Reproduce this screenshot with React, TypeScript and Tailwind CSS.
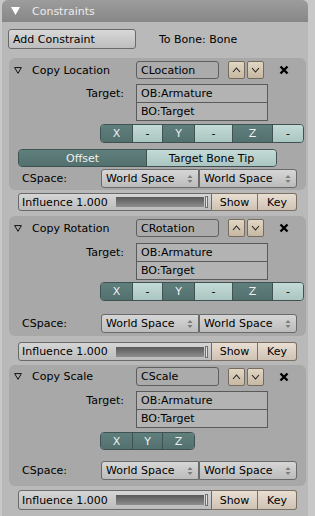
import type { ReactNode } from "react";

type Kind = "location" | "rotation" | "scale";

const spacing: Record<Kind, { box: string; head: string; target: string; xyz: string; cspace: string }> = {
  location: { box: "pt-[3px] pb-[2px]", head: "h-[18px]", target: "mt-[5px]", xyz: "mt-[3px] h-[19px]", cspace: "mt-[2px]" },
  rotation: { box: "pt-[3px] pb-[3px]", head: "h-[18px]", target: "mt-[6px]", xyz: "mt-[2px] h-[19px]", cspace: "mt-[13px]" },
  scale: { box: "pt-[2px] pb-[6px]", head: "h-[19px]", target: "mt-[5px]", xyz: "mt-[4px] h-[18px]", cspace: "mt-[11px]" },
};

function UpDownArrows() {
  return (
    <svg width="6" height="10" viewBox="0 0 6 10" className="shrink-0">
      <path d="M0.5 4 L3 1 L5.5 4 Z" fill="#7c7c7c" />
      <path d="M0.5 6 L3 9 L5.5 6 Z" fill="#7c7c7c" />
    </svg>
  );
}

function Dropdown({ label }: { label: string }) {
  return (
    <div className="flex h-full w-[98px] items-center justify-between border border-[#6a6a6a] bg-gradient-to-b from-[#d6d6d6] to-[#bcbcbc] pl-[4px] pr-[5px] first:rounded-l-[3px] last:rounded-r-[3px]">
      <span>{label}</span>
      <UpDownArrows />
    </div>
  );
}

function Segment({ dark, children, w }: { dark: boolean; children: ReactNode; w: string }) {
  return (
    <div
      className={`flex h-full items-center justify-center border-r border-[#3f5251] last:border-r-0 ${w} ${
        dark ? "bg-gradient-to-b from-[#5f7f7d] to-[#52706e] text-[#f0f0f0]" : "bg-gradient-to-b from-[#c4dbd7] to-[#aac5c1] text-black"
      }`}
    >
      {children}
    </div>
  );
}

function MoveButton({ up }: { up: boolean }) {
  return (
    <div className="flex h-[18px] w-[17px] items-center justify-center rounded-[2px] border border-[#766c5e] bg-gradient-to-b from-[#e2d6c4] to-[#c6b8a2]">
      <svg width="9" height="6" viewBox="0 0 9 6">
        <path d={up ? "M1 5 L4.5 1 L8 5" : "M1 1 L4.5 5 L8 1"} fill="none" stroke="#222" strokeWidth="1.1" />
      </svg>
    </div>
  );
}

function Constraint({ title, name, kind }: { title: string; name: string; kind: Kind }) {
  const s = spacing[kind];
  return (
    <div className={`ml-[7px] w-[297px] rounded-[6px] bg-[#a8a8a8] ${s.box}`}>
      <div className={`flex items-center ${s.head}`}>
        <div className="flex w-[127px] items-center">
          <svg width="8" height="7" viewBox="0 0 8 7" className="ml-[5px]">
            <path d="M0.6 0.6 H7.4 L4 6.3 Z" fill="none" stroke="#111" strokeWidth="1" />
          </svg>
          <span className="ml-[10px]">{title}</span>
        </div>
        <div className="flex h-full w-[83px] items-center rounded-[3px] border border-[#5e5e5e] bg-[#ababab] pl-[4px]">
          {name}
        </div>
        <div className="ml-[9px] flex gap-[2px]">
          <MoveButton up />
          <MoveButton up={false} />
        </div>
        <svg width="10" height="10" viewBox="0 0 10 10" className="ml-[15px]">
          <path d="M1.5 1.5 L8.5 8.5 M8.5 1.5 L1.5 8.5" stroke="#000" strokeWidth="2.4" />
        </svg>
      </div>

      <div className={`flex ${s.target}`}>
        <div className="flex h-[18px] w-[115px] items-center justify-end">Target:</div>
        <div className="ml-[12px] w-[132px] border border-[#5a5a5a] bg-[#b3b3b3]">
          <div className="flex h-[17px] items-center pl-[4px]">OB:Armature</div>
          <div className="flex h-[18px] items-center border-t border-[#5a5a5a] pl-[4px]">BO:Target</div>
        </div>
      </div>

      {kind === "scale" ? (
        <div className={`ml-[91px] flex w-[95px] overflow-hidden rounded-[4px] border border-[#3f5251] ${s.xyz}`}>
          <Segment dark w="w-[32px]">X</Segment>
          <Segment dark w="w-[30px]">Y</Segment>
          <Segment dark w="w-[31px]">Z</Segment>
        </div>
      ) : (
        <div className={`ml-[91px] flex w-[204px] overflow-hidden rounded-[4px] border border-[#3f5251] ${s.xyz}`}>
          <Segment dark w="w-[32px]">X</Segment>
          <Segment dark={false} w="w-[30px]">-</Segment>
          <Segment dark w="w-[32px]">Y</Segment>
          <Segment dark={false} w="w-[38px]">-</Segment>
          <Segment dark w="w-[40px]">Z</Segment>
          <Segment dark={false} w="w-[30px]">-</Segment>
        </div>
      )}

      {kind === "location" ? (
        <div className="ml-[9px] mt-[6px] flex h-[18px] w-[259px] overflow-hidden rounded-[4px] border border-[#3f5251]">
          <Segment dark w="w-[129px]">Offset</Segment>
          <Segment dark={false} w="w-[130px]">Target Bone Tip</Segment>
        </div>
      ) : null}

      <div className={`flex h-[19px] items-center ${s.cspace}`}>
        <div className="w-[92px] pl-[13px]">CSpace:</div>
        <div className="flex h-full">
          <Dropdown label="World Space" />
          <Dropdown label="World Space" />
        </div>
      </div>
    </div>
  );
}

function Influence({ className }: { className: string }) {
  return (
    <div className={`ml-[16px] flex w-[279px] ${className}`}>
      <div className="flex h-full w-[194px] items-center rounded-l-[3px] border border-[#6a6a6a] bg-gradient-to-b from-[#d6d6d6] to-[#bcbcbc]">
        <span className="w-[97px] pl-[3px]">Influence 1.000</span>
        <div className="h-[10px] w-[88px] bg-gradient-to-b from-[#595959] to-[#8e8e8e]" />
        <div className="ml-[1px] h-[12px] w-[3px] border border-[#6f6f6f] bg-[#e4e4e4]" />
      </div>
      <div className="flex h-full w-[46px] items-center justify-center border border-l-0 border-[#7a7064] bg-gradient-to-b from-[#e8ded2] to-[#cec2b4]">
        Show
      </div>
      <div className="flex h-full w-[39px] items-center justify-center rounded-r-[3px] border border-l-0 border-[#7a7064] bg-gradient-to-b from-[#e8ded2] to-[#cec2b4]">
        Key
      </div>
    </div>
  );
}

export default function App() {
  return (
    <div className="h-[516px] w-[315px] overflow-hidden bg-[#c8c8c8] font-['DejaVu_Sans',sans-serif] text-[11px] leading-none text-black">
      <div className="ml-[2px] h-full w-[306px] rounded-t-[6px] bg-[#b9b9b9]">
        <div className="flex h-[22px] items-center rounded-t-[6px] bg-gradient-to-b from-[#9c9c9c] to-[#878787]">
          <svg width="9" height="8" viewBox="0 0 9 8" className="ml-[9px]">
            <path d="M0 0 H9 L4.5 8 Z" fill="#ffffff" />
          </svg>
          <span className="ml-[12px] text-[#ececec]">Constraints</span>
        </div>

        <div className="mt-[7px] flex h-[20px] items-center">
          <div className="ml-[6px] flex h-full w-[128px] items-center rounded-[3px] border border-[#6a6a6a] bg-gradient-to-b from-[#d8d8d8] to-[#bdbdbd] pl-[4px]">
            Add Constraint
          </div>
          <span className="ml-[23px]">To Bone: Bone</span>
        </div>

        <div className="mt-[9px]">
          <Constraint title="Copy Location" name="CLocation" kind="location" />
        </div>
        <Influence className="mt-[3px] h-[18px]" />

        <div className="mt-[5px]">
          <Constraint title="Copy Rotation" name="CRotation" kind="rotation" />
        </div>
        <Influence className="mt-[6px] h-[19px]" />

        <div className="mt-[4px]">
          <Constraint title="Copy Scale" name="CScale" kind="scale" />
        </div>
        <Influence className="mt-[4px] h-[20px]" />
      </div>
    </div>
  );
}
